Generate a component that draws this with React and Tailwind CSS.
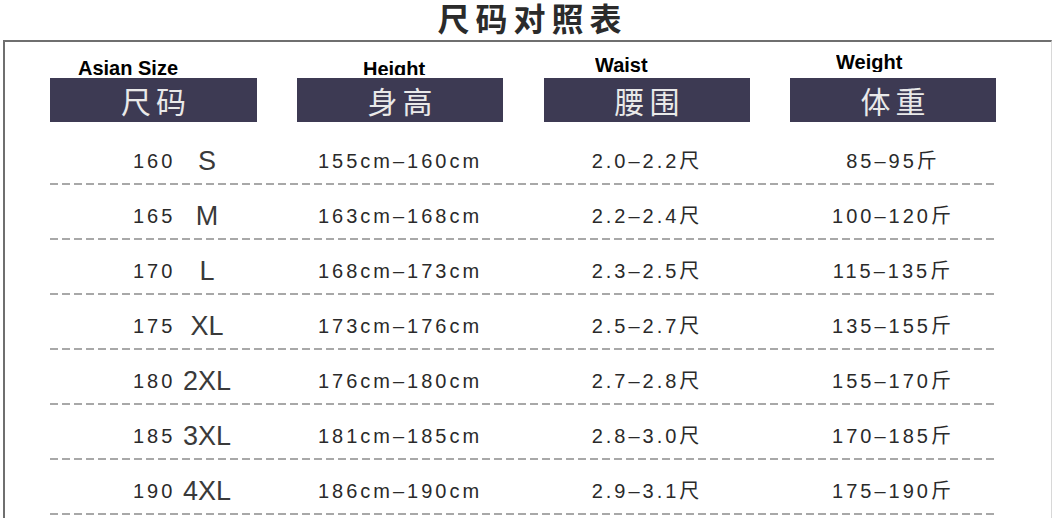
const rows = [
  ["160", "S", "155cm–160cm", "2.0–2.2尺", "85–95斤"],
  ["165", "M", "163cm–168cm", "2.2–2.4尺", "100–120斤"],
  ["170", "L", "168cm–173cm", "2.3–2.5尺", "115–135斤"],
  ["175", "XL", "173cm–176cm", "2.5–2.7尺", "135–155斤"],
  ["180", "2XL", "176cm–180cm", "2.7–2.8尺", "155–170斤"],
  ["185", "3XL", "181cm–185cm", "2.8–3.0尺", "170–185斤"],
  ["190", "4XL", "186cm–190cm", "2.9–3.1尺", "175–190斤"],
];

// english labels sit a little off in each column, like the source image
const headers = [
  { en: "Asian Size", zh: "尺码", col: "col-start-1", label: "ml-[28px] pt-[16px] h-[36px]" },
  { en: "Height", zh: "身高", col: "col-start-3", label: "ml-[66px] pt-[17px] h-[33px]" },
  { en: "Waist", zh: "腰围", col: "col-start-5", label: "ml-[51px] pt-[13px] h-[36px]" },
  { en: "Weight", zh: "体重", col: "col-start-7", label: "ml-[46px] pt-[10px] h-[30px]" },
];

const cols = "grid grid-cols-[207px_40px_206px_41px_206px_40px_206px]";

const App = () => {
  return (
    <div className="w-[1055px] h-[518px] overflow-hidden bg-white font-['Liberation_Sans','Noto_Sans_CJK_SC',sans-serif] text-[#2a2a2a]">
      {/* Title */}
      <div className="h-[40px] flex justify-center pl-[10px]">
        <h1 className="h-[40px] -mt-[3px] leading-[40px] text-[32px] font-bold tracking-[6px] text-[#2b2b2b] font-['Noto_Sans_CJK_SC',sans-serif]">
          尺码对照表
        </h1>
      </div>

      {/* Frame */}
      <div className="ml-[3px] w-[1049px] h-[478px] border-t-2 border-l-2 border-[#6f6f6f] border-r border-r-[#d8d8d8] pl-[45px]">
        {/* Header */}
        <div className={cols}>
          {headers.map((h) => (
            <div key={h.en} className={`${h.col} flex flex-col`}>
              <div className="h-[36px]">
                <div className={`${h.label} overflow-hidden`}>
                  <span className="block text-[20px] leading-[20px] font-bold text-black whitespace-nowrap">
                    {h.en}
                  </span>
                </div>
              </div>
              <div className="h-[44px] bg-[#3d3a53] flex items-center justify-center">
                <span className="text-[30px] leading-none tracking-[5px] pl-[5px] text-[#e9e9e9] font-['Noto_Sans_CJK_SC',sans-serif]">
                  {h.zh}
                </span>
              </div>
            </div>
          ))}
        </div>

        {/* Rows */}
        <div className="mt-[8px] w-[946px]">
          {rows.map((r) => (
            <div key={r[0]}>
              <div className={`${cols} h-[53px] pt-[9px] items-center text-[20px] tracking-[3px]`}>
                <div className="flex items-center pl-[83px]">
                  <span className="w-[48px] leading-none">{r[0]}</span>
                  <span className="w-[52px] text-center text-[27px] tracking-normal leading-none text-[#3a3a3a]">
                    {r[1]}
                  </span>
                </div>
                <div className="col-start-3 text-center leading-none whitespace-nowrap">{r[2]}</div>
                <div className="col-start-5 text-center leading-none whitespace-nowrap">{r[3]}</div>
                <div className="col-start-7 text-center leading-none whitespace-nowrap">{r[4]}</div>
              </div>
              <div className="h-[2px] bg-[repeating-linear-gradient(90deg,#a8a8a8_0px,#a8a8a8_8px,transparent_8px,transparent_12px)]" />
            </div>
          ))}
        </div>
      </div>
    </div>
  );
};

export default App;
